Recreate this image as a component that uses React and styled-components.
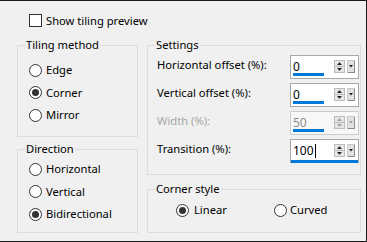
import React from "react";
import styled, { createGlobalStyle } from "styled-components";

const GlobalStyle = createGlobalStyle`
  html, body { margin: 0; padding: 0; background: #f0f0f0; }
  body { font-family: "Noto Sans", "Segoe UI", Arial, sans-serif; font-size: 11.2px; color: #000; }
  * { box-sizing: border-box; }
`;

const Window = styled.div`
  width: 367px;
  height: 242px;
  background: #f0f0f0;
  border-top: 1px solid #1a1a1a;
  border-right: 1px solid #1a1a1a;
  border-bottom: 1px solid #1a1a1a;
  padding: 12px 0 0 17px;
`;

const CheckRow = styled.label`
  display: flex;
  align-items: center;
  height: 15px;
  margin-left: 12px;
  gap: 4px;
  line-height: 15px;
`;

const CheckBox = styled.span`
  width: 13px;
  height: 13px;
  border: 1px solid #333;
  background: #fff;
  flex: none;
`;

const Main = styled.div`
  display: grid;
  grid-template-columns: 121px 214px;
  column-gap: 9px;
  margin-top: 9px;
`;

const Column = styled.div`
  display: flex;
  flex-direction: column;
  gap: ${(p) => p.$gap}px;
`;

const Group = styled.fieldset`
  margin: 0;
  padding: 0;
  border: 1px solid #dcdcdc;
  height: ${(p) => p.$h}px;
  min-width: 0;
`;

const Legend = styled.legend`
  margin-left: 7px;
  padding: 0 1px;
  line-height: 16px;
  font-size: 11.2px;
`;

const RadioList = styled.div`
  display: flex;
  flex-direction: column;
  padding: ${(p) => p.$padTop}px 0 0 11px;
`;

const RadioRow = styled.label`
  display: flex;
  align-items: center;
  gap: ${(p) => p.$gap || 4}px;
  height: ${(p) => p.$h || 22.5}px;
  line-height: 16px;
`;

const RadioCircle = styled.span`
  width: 13px;
  height: 13px;
  border-radius: 50%;
  border: 1px solid #333;
  background: #fff;
  flex: none;
  display: flex;
  align-items: center;
  justify-content: center;
  &::after {
    content: "";
    width: 7px;
    height: 7px;
    border-radius: 50%;
    background: ${(p) => (p.$checked ? "#333" : "transparent")};
  }
`;

const Radio = ({ label, checked, h, gap }) => (
  <RadioRow $h={h} $gap={gap}>
    <RadioCircle $checked={checked} />
    <span>{label}</span>
  </RadioRow>
);

const SettingsList = styled.div`
  display: flex;
  flex-direction: column;
  gap: 4px;
  padding: 2px 1px 0 9px;
`;

const SettingRow = styled.div`
  display: flex;
  align-items: center;
  justify-content: space-between;
  height: 24px;
`;

const SettingLabel = styled.span`
  color: ${(p) => (p.$disabled ? "#a6a6a6" : "#000")};
  line-height: 16px;
  padding-bottom: 4px;
`;

const Spin = styled.div`
  position: relative;
  width: 69px;
  height: 24px;
  border: 1px solid ${(p) => (p.$disabled ? "#cccccc" : "#a8a8a8")};
  background: ${(p) => (p.$disabled ? "#f7f7f7" : "#fff")};
  display: flex;
  align-items: center;
  padding: 0 3px 0 2px;
`;

const SpinValue = styled.span`
  flex: 1;
  line-height: 22px;
  font-size: 12px;
  color: ${(p) => (p.$disabled ? "#8a8a8a" : "#000")};
  display: flex;
  align-items: center;
`;

const Caret = styled.span`
  display: inline-block;
  width: 1px;
  height: 14px;
  background: #000;
  margin-left: 1px;
`;

const Bar = styled.span`
  position: absolute;
  left: ${(p) => (p.$full ? 0 : 2)}px;
  bottom: ${(p) => (p.$full ? -1 : 2)}px;
  height: 3px;
  width: ${(p) => (p.$full ? "100%" : "31px")};
  background: #0078d7;
`;

const Buttons = ({ disabled }) => {
  const tri = disabled ? "#a0a0a0" : "#1e1e1e";
  return (
    <svg width="21" height="13" viewBox="0 0 21 13" style={{ flex: "none", marginTop: -2 }}>
      <rect x="0.5" y="0.5" width="10" height="12" fill="#e6e6e6" stroke="#bdbdbd" />
      <line x1="1" y1="6.5" x2="10" y2="6.5" stroke="#bdbdbd" />
      <path d="M3 5 L5.5 2.3 L8 5 Z" fill={tri} />
      <path d="M3 8 L5.5 10.7 L8 8 Z" fill={tri} />
      <rect x="13.5" y="0.5" width="7" height="12" fill="#e1e1e1" stroke="#c8c8c8" />
      <line x1="20.5" y1="1" x2="20.5" y2="13" stroke="#8c8c8c" />
      <line x1="14" y1="12.5" x2="21" y2="12.5" stroke="#8c8c8c" />
      <path d="M15 5 L17 7.5 L19 5 Z" fill={tri} />
    </svg>
  );
};

const SpinField = ({ value, disabled, focused }) => (
  <Spin $disabled={disabled}>
    <SpinValue $disabled={disabled}>
      {value}
      {focused && <Caret />}
    </SpinValue>
    <Buttons disabled={disabled} />
    <Bar $full={focused} />
  </Spin>
);

const CornerRow = styled.div`
  display: grid;
  grid-template-columns: 98px auto;
  padding: 2px 0 0 28px;
`;

export default function App() {
  return (
    <>
      <GlobalStyle />
      <Window>
        <CheckRow>
          <CheckBox />
          <span>Show tiling preview</span>
        </CheckRow>
        <Main>
          <Column $gap={4}>
            <Group $h={100}>
              <Legend>Tiling method</Legend>
              <RadioList $padTop={6}>
                <Radio label="Edge" />
                <Radio label="Corner" checked />
                <Radio label="Mirror" />
              </RadioList>
            </Group>
            <Group $h={92}>
              <Legend>Direction</Legend>
              <RadioList $padTop={1}>
                <Radio label="Horizontal" />
                <Radio label="Vertical" />
                <Radio label="Bidirectional" checked />
              </RadioList>
            </Group>
          </Column>
          <Column $gap={6}>
            <Group $h={138}>
              <Legend>Settings</Legend>
              <SettingsList>
                <SettingRow>
                  <SettingLabel>Horizontal offset (%):</SettingLabel>
                  <SpinField value="0" />
                </SettingRow>
                <SettingRow>
                  <SettingLabel>Vertical offset (%):</SettingLabel>
                  <SpinField value="0" />
                </SettingRow>
                <SettingRow>
                  <SettingLabel $disabled>Width (%):</SettingLabel>
                  <SpinField value="50" disabled />
                </SettingRow>
                <SettingRow>
                  <SettingLabel>Transition (%):</SettingLabel>
                  <SpinField value="100" focused />
                </SettingRow>
              </SettingsList>
            </Group>
            <Group $h={52}>
              <Legend>Corner style</Legend>
              <CornerRow>
                <Radio label="Linear" checked h={22} gap={5} />
                <Radio label="Curved" h={22} gap={3} />
              </CornerRow>
            </Group>
          </Column>
        </Main>
      </Window>
    </>
  );
}
